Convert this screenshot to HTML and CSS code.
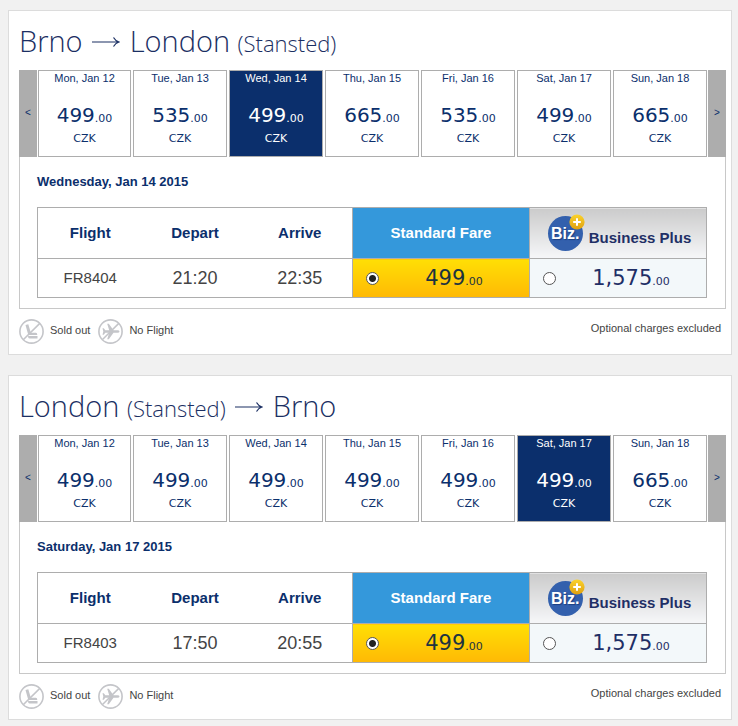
FILE: index.html
```html
<!DOCTYPE html>
<html lang="en">
<head>
  <meta charset="UTF-8" />
  <title>Select flights</title>
  <link rel="stylesheet" href="styles.css">
</head>
<body>

  <!-- Shared icons -->
  <svg class="sprite" aria-hidden="true">
    <symbol id="icon-soldout" viewBox="0 0 25 25">
      <circle cx="12.5" cy="12.5" r="11.6" fill="none" stroke="#c4c5c9" stroke-width="1.6" />
      <path d="M6.5 6l2.8-.7 2.5 8.500h5q1.500 0 1.500 2.200H9.300z" fill="#c4c5c9" />
      <path d="M9 17h9.500v2.600h-8q-1.500 0-1.500-2.600z" fill="#c4c5c9" />
      <path d="M4.500 20.500L20.800 4.400" stroke="#c4c5c9" stroke-width="1.600" />
    </symbol>
    <symbol id="icon-noflight" viewBox="0 0 25 25">
      <circle cx="12.5" cy="12.5" r="11.6" fill="none" stroke="#c4c5c9" stroke-width="1.6" />
      <path d="M21.500 12.500q0-1.200-2-1.200h-4L10.800 4.800H9.200l2 6.500H7.300L5.800 9.300H4.500l.8 3.200-.8 3.200h1.300l1.500-2h3.900l-2 6.500h1.600l4.700-6.500h4q2 0 2-1.200z" fill="#c4c5c9" />
      <path d="M4.500 20.500L20.800 4.400" stroke="#c4c5c9" stroke-width="1.500" />
    </symbol>
    <symbol id="icon-plus" viewBox="0 0 16 16">
      <linearGradient id="gold" x1="0" y1="0" x2="0" y2="1">
        <stop offset="0" stop-color="#fbd32c" />
        <stop offset="1" stop-color="#dfa010" />
      </linearGradient>
      <circle cx="8" cy="8" r="7.600" fill="url(#gold)" />
      <path d="M8 4.200v7.600M4.200 8h7.600" stroke="#fff" stroke-width="2" />
    </symbol>
    <symbol id="icon-arrow" viewBox="0 0 28 12">
      <path d="M0 6h27M21.500 1.500Q23.500 5 27 6Q23.500 7 21.500 10.500" fill="none" stroke="#1b2f63" stroke-width="1.200" />
    </symbol>
  </svg>

  <main>
    <section class="card">
      <h1>Brno <svg class="arrow" role="img" aria-label="to"><use href="#icon-arrow" /></svg> London <small>(Stansted)</small></h1>
      <div class="days" data-prices="499,535,499,665,535,499,665" data-selected="2"></div>
      <div class="panel">
        <h2>Wednesday, Jan 14 2015</h2>
        <table>
          <colgroup><col><col><col><col class="fare-col"><col class="fare-col"></colgroup>
          <thead>
            <tr>
              <th>Flight</th>
              <th>Depart</th>
              <th>Arrive</th>
              <th class="standard">Standard Fare</th>
              <th class="business"><div class="plus-fare"><span class="biz">Biz.<svg><use href="#icon-plus" /></svg></span><span>Business Plus</span></div></th>
            </tr>
          </thead>
          <tbody>
            <tr>
              <td>FR8404</td>
              <td class="time">21:20</td>
              <td class="time">22:35</td>
              <td class="standard"><label class="fare"><input type="radio" name="out" checked><span class="price">499<small>.00</small></span></label></td>
              <td class="business"><label class="fare"><input type="radio" name="out"><span class="price">1,575<small>.00</small></span></label></td>
            </tr>
          </tbody>
        </table>
      </div>
      <div class="legend">
        <svg><use href="#icon-soldout" /></svg><span>Sold out</span>
        <svg><use href="#icon-noflight" /></svg><span>No Flight</span>
        <p>Optional charges excluded</p>
      </div>
    </section>

    <section class="card">
      <h1>London <small>(Stansted)</small> <svg class="arrow" role="img" aria-label="to"><use href="#icon-arrow" /></svg> Brno</h1>
      <div class="days" data-prices="499,499,499,499,499,499,665" data-selected="5"></div>
      <div class="panel">
        <h2>Saturday, Jan 17 2015</h2>
        <table>
          <colgroup><col><col><col><col class="fare-col"><col class="fare-col"></colgroup>
          <thead>
            <tr>
              <th>Flight</th>
              <th>Depart</th>
              <th>Arrive</th>
              <th class="standard">Standard Fare</th>
              <th class="business"><div class="plus-fare"><span class="biz">Biz.<svg><use href="#icon-plus" /></svg></span><span>Business Plus</span></div></th>
            </tr>
          </thead>
          <tbody>
            <tr>
              <td>FR8403</td>
              <td class="time">17:50</td>
              <td class="time">20:55</td>
              <td class="standard"><label class="fare"><input type="radio" name="back" checked><span class="price">499<small>.00</small></span></label></td>
              <td class="business"><label class="fare"><input type="radio" name="back"><span class="price">1,575<small>.00</small></span></label></td>
            </tr>
          </tbody>
        </table>
      </div>
      <div class="legend">
        <svg><use href="#icon-soldout" /></svg><span>Sold out</span>
        <svg><use href="#icon-noflight" /></svg><span>No Flight</span>
        <p>Optional charges excluded</p>
      </div>
    </section>
  </main>

  <script>
    const days = ['Mon, Jan 12', 'Tue, Jan 13', 'Wed, Jan 14', 'Thu, Jan 15', 'Fri, Jan 16', 'Sat, Jan 17', 'Sun, Jan 18'];

    document.querySelectorAll('.days').forEach(strip => {
      const prices = strip.dataset.prices.split(',');
      const cells = days.map((day, i) => `
        <button class="day${i == strip.dataset.selected ? ' selected' : ''}">
          <span class="date">${day}</span>
          <span class="price">${prices[i]}<small>.00</small></span>
          <span class="currency">CZK</span>
        </button>`).join('');
      strip.innerHTML = `
        <button class="nav" aria-label="Previous days">&lt;</button>
        <div class="day-list">${cells}</div>
        <button class="nav" aria-label="Next days">&gt;</button>`;
    });
  </script>

</body>
</html>
```

FILE: styles.css
```css
* {
  box-sizing: border-box;
}

body {
  margin: 0;
  background: #f1f1f1;
  color: #444;
  font-family: "Liberation Sans", Arial, sans-serif;
  font-size: 11px;
}

.sprite {
  display: block;
  width: 0;
  height: 0;
}

main {
  display: flex;
  flex-direction: column;
  gap: 20px;
  padding: 10px 6px 7px 8px;
}

.card {
  background: #fff;
  border: 1px solid #dcdcdc;
  padding: 0 5px 0 10px;
}

h1 {
  margin: 0;
  height: 59px;
  line-height: 59px;
  font-family: "Open Sans", "Noto Sans", sans-serif;
  font-size: 29px;
  font-weight: 300;
  color: #1b2f63;
}

h1 small {
  font-size: 22px;
}

.arrow {
  width: 28px;
  height: 12px;
  margin: 0 2px;
  vertical-align: 4px;
}

/* Day strip */
.days {
  display: grid;
  grid-template-columns: 18px 1fr 18px;
  gap: 1px;
  height: 87px;
}

.day-list {
  display: grid;
  grid-template-columns: 93fr repeat(6, 94fr);
  gap: 2px;
}

button {
  margin: 0;
  padding: 0;
  font: inherit;
  color: #0b2f6c;
  cursor: pointer;
}

.nav {
  border: 0;
  background: #adadad;
  font-size: 10px;
  padding-bottom: 2px;
}

.day {
  display: flex;
  flex-direction: column;
  align-items: center;
  background: #fff;
  border: 1px solid #adadad;
}

.day.selected {
  background: #0b2f6c;
  color: #fff;
}

.date {
  line-height: 14px;
}

.price {
  font-family: "DejaVu Sans", Verdana, sans-serif;
  font-size: 20px;
  line-height: 24px;
}

.price small {
  font-size: 11px;
}

.day .price {
  margin-top: 18px;
}

.currency {
  font-family: "DejaVu Sans", Verdana, sans-serif;
  line-height: 16px;
}

/* Flight details */
.panel {
  border: 1px solid #c8c8c8;
  border-top: 0;
  padding: 17px 18px 10px 17px;
}

h2 {
  margin: 0 0 17px;
  font-size: 13px;
  line-height: 16px;
  color: #0b2f6c;
}

table {
  width: 100%;
  table-layout: fixed;
  border-collapse: collapse;
  border: 1px solid #adadad;
  text-align: center;
  font-size: 15px;
}

.fare-col {
  width: 177px;
}

tr {
  border-bottom: 1px solid #adadad;
}

th {
  height: 51px;
  padding: 0 0 2px;
  color: #0b2f6c;
}

td {
  height: 39px;
  padding: 0 0 2px;
}

.time {
  padding: 0;
  font-size: 18px;
}

.standard,
.business {
  border-left: 1px solid #adadad;
}

th.standard {
  background: #3498db;
  color: #fff;
}

th.business {
  background: linear-gradient(#cbcbcb, #f6f7f9);
  color: #1f2f66;
}

td.standard {
  background: linear-gradient(#ffdf05, #ffb905);
}

td.business {
  background: #f3f8fa;
}

.plus-fare {
  display: flex;
  align-items: center;
  justify-content: center;
  gap: 6px;
  padding: 2px 0 0 3px;
}

.plus-fare span:last-child {
  padding-top: 8px;
}

.biz {
  position: relative;
  width: 35px;
  height: 35px;
  border-radius: 50%;
  background: #3360ad;
  color: #fff;
  font-family: "Liberation Sans Narrow", "Liberation Sans", sans-serif;
  font-size: 16px;
  line-height: 35px;
  text-align: center;
  text-shadow: 1px 1px 1px #1c3f80;
}

.biz svg {
  position: absolute;
  top: -2px;
  right: -2px;
  width: 16px;
  height: 16px;
}

.fare {
  display: flex;
  align-items: center;
  padding-left: 13px;
}

.fare .price {
  flex: 1;
  padding-top: 3px;
  font-size: 21px;
  color: #1f2f66;
}

td.standard .price {
  color: #1d3340;
}

td.standard,
td.business {
  padding: 0;
}

input[type="radio"] {
  appearance: none;
  width: 13px;
  height: 13px;
  margin: 0;
  border: 1px solid #555;
  border-radius: 50%;
  background: #fff;
}

input[type="radio"]:checked {
  background: radial-gradient(circle, #222 3px, #fff 4px);
}

/* Legend */
.legend {
  display: flex;
  align-items: center;
  height: 45px;
}

.legend svg {
  width: 25px;
  height: 25px;
  margin-right: 6px;
}

.legend span {
  margin-right: 8px;
  padding-bottom: 3px;
}

.legend p {
  margin: 0 5px 7px auto;
}
```
